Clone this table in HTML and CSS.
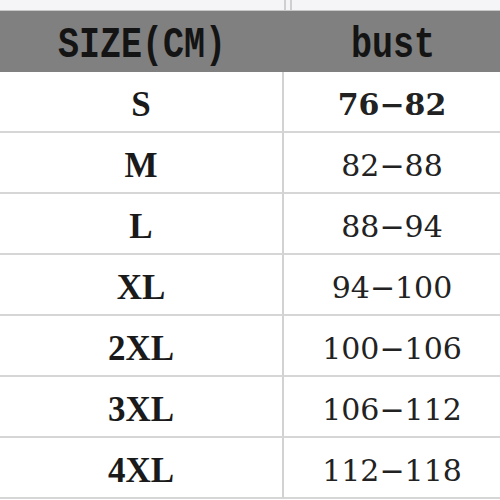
FILE: index.html
```html
<!DOCTYPE html>
<html>
<head>
<meta charset="utf-8">
<link rel="stylesheet" href="styles.css">
</head>
<body>
<div class="strip">
  <div class="strip-line"></div>
  <div class="strip-line"></div>
</div>
<div class="chart">
  <div class="head left"><span class="hd">SIZE(CM)</span></div>
  <div class="head right"><span class="hd">bust</span></div>

  <div class="cell left size">S</div>
  <div class="cell right num strong">76−82</div>

  <div class="cell left size">M</div>
  <div class="cell right num">82−88</div>

  <div class="cell left size">L</div>
  <div class="cell right num">88−94</div>

  <div class="cell left size">XL</div>
  <div class="cell right num">94−100</div>

  <div class="cell left size">2XL</div>
  <div class="cell right num">100−106</div>

  <div class="cell left size">3XL</div>
  <div class="cell right num">106−112</div>

  <div class="cell left size">4XL</div>
  <div class="cell right num">112−118</div>
</div>
</body>
</html>
```

FILE: styles.css
```css
html, body {
  margin: 0;
  padding: 0;
  background: #ffffff;
  width: 500px;
  height: 500px;
  overflow: hidden;
}

* {
  box-sizing: border-box;
}

.strip {
  height: 11px;
  background: #f5f5f8;
  display: flex;
  padding-left: 284px;
  gap: 4px;
  border-bottom: 1px solid #c8c8c8;
}

.strip-line {
  width: 2px;
  background: #cfcfd2;
}

.chart {
  display: grid;
  grid-template-columns: 284px 216px;
}

.head {
  height: 61px;
  background: #808080;
  display: flex;
  align-items: center;
  justify-content: center;
  color: #141414;
}

.hd {
  display: inline-block;
  font-family: "Liberation Mono", monospace;
  font-weight: bold;
  font-size: 35px;
  transform: scaleY(1.25);
  padding-top: 6px;
}

.head.right .hd {
  padding-left: 2px;
}

.cell {
  height: 61px;
  border-bottom: 2px solid #d6d6d6;
  display: flex;
  align-items: center;
  justify-content: center;
  color: #1a1a1a;
}

.cell.left {
  border-right: 2px solid #d2d2d2;
}

.size {
  font-family: "Liberation Serif", serif;
  font-weight: bold;
  font-size: 35px;
  padding-top: 7px;
}

.num {
  font-family: "DejaVu Serif", serif;
  font-size: 30px;
  color: #222;
  padding-top: 6px;
}

.num.strong {
  font-weight: bold;
}
```
